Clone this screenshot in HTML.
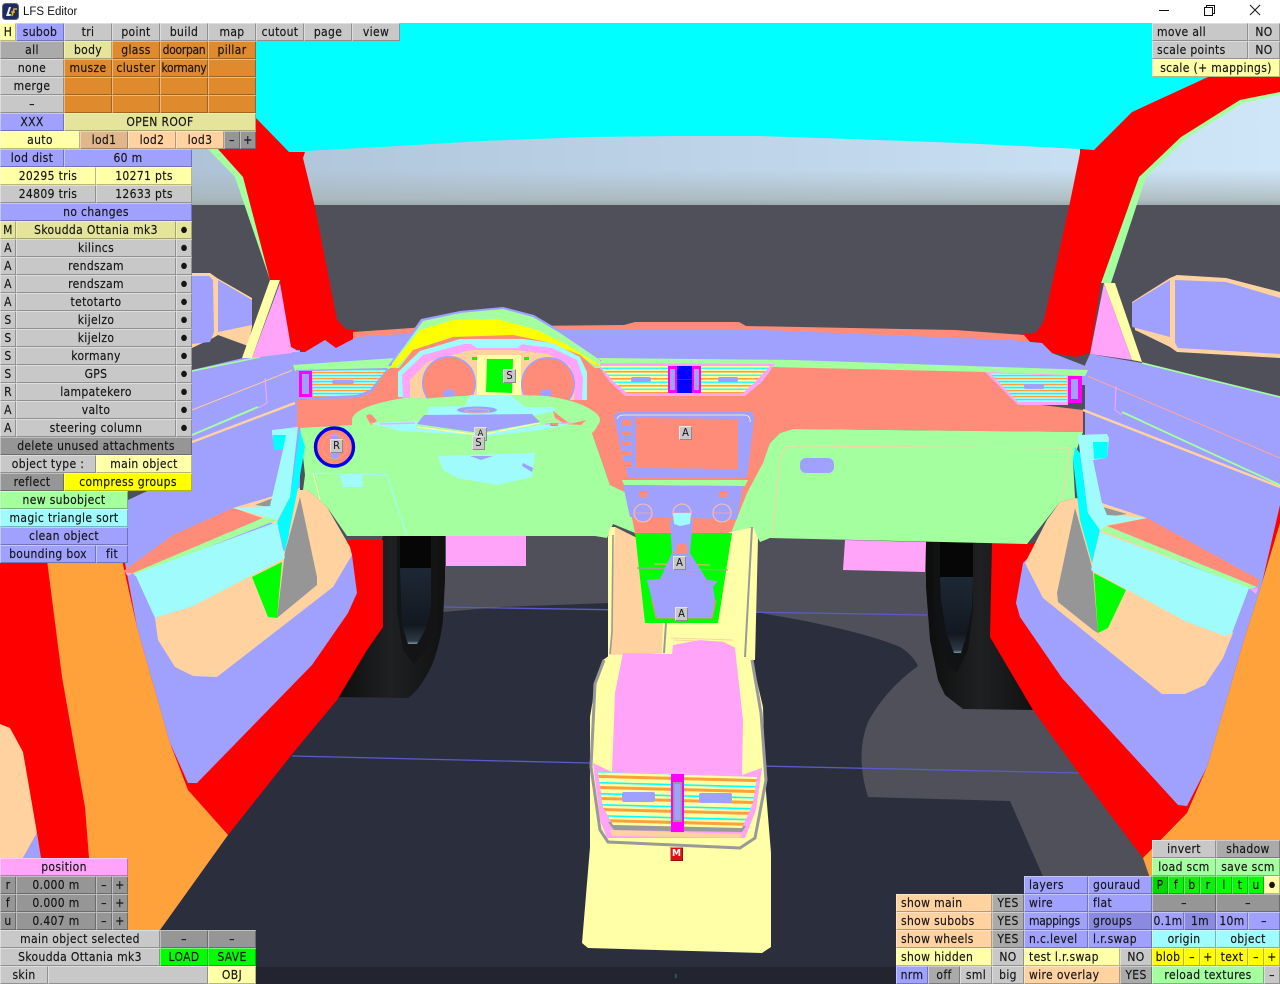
<!DOCTYPE html>
<html><head><meta charset="utf-8"><title>LFS Editor</title>
<style>
html,body{margin:0;padding:0;background:#fff;overflow:hidden}
#w{position:relative;width:1280px;height:984px;overflow:hidden;background:#fff}
svg{position:absolute;left:0;top:0}
.b{position:absolute;height:18px;line-height:18px;text-align:center;box-sizing:border-box;font-family:"DejaVu Sans Condensed","DejaVu Sans",sans-serif;font-stretch:condensed;font-size:12px;letter-spacing:.35px;-webkit-text-stroke:.15px #151515;color:#151515;white-space:nowrap;box-shadow:inset 1px 1px 0 rgba(255,255,255,.4),inset -1px -1px 0 rgba(0,0,0,.28)}
.l{text-align:left;padding-left:5px}
.u{font-size:8px;letter-spacing:0}
.z{letter-spacing:-.3px}
.g{background:#c8c8c8}.d{background:#969696}.m{background:#aaa}.p{background:#a0a0ff}.q{background:#8a8ae0}.y{background:#ffffa8}.e{background:#e4e49a}.o{background:#e08a2e}.s{background:#ffd2a0}.t{background:#dfb78a}.c{background:#a0fcfc}.n{background:#a4ff9f}.Y{background:#ff0}.G{background:#0f0}.k{background:#ffa4f8}.j{background:#00d800}.h{background:#10ee10}
.tag{position:absolute;width:13px;height:14px;line-height:14px;text-align:center;font-family:"DejaVu Sans Condensed","DejaVu Sans",sans-serif;font-stretch:condensed;font-size:11px;color:#111;background:#c8c8c8;box-shadow:inset 1px 1px 0 rgba(255,255,255,.5),inset -1px -1px 0 rgba(0,0,0,.3)}
#tt{position:absolute;left:23px;top:5px;font:11.5px/15px "Liberation Sans",sans-serif;color:#111}
</style></head><body><div id="w">
<svg width="1280" height="984" viewBox="0 0 1280 984" xmlns="http://www.w3.org/2000/svg">
<defs>
<linearGradient id="sk" x1="0" y1="0" x2="1" y2="0"><stop offset="0" stop-color="#a9bdd2"/><stop offset=".55" stop-color="#bcd3e8"/><stop offset="1" stop-color="#cfe6f8"/></linearGradient>
<linearGradient id="hz" x1="0" y1="0" x2="0" y2="1"><stop offset="0" stop-color="#a9b5b5" stop-opacity="0"/><stop offset=".8" stop-color="#a9b5b5" stop-opacity=".75"/><stop offset="1" stop-color="#97a5a8" stop-opacity=".95"/></linearGradient>
<linearGradient id="hole" x1="0" y1="0" x2="0" y2="1"><stop offset="0" stop-color="#1d2835"/><stop offset=".75" stop-color="#131820"/><stop offset=".96" stop-color="#2c3945"/><stop offset="1" stop-color="#7d93a3"/></linearGradient>
<linearGradient id="ty" x1="0" y1="0" x2="1" y2="0"><stop offset="0" stop-color="#0d0d0d"/><stop offset=".5" stop-color="#1f2022"/><stop offset="1" stop-color="#111"/></linearGradient>
<pattern id="st" width="9" height="7" patternUnits="userSpaceOnUse"><rect width="9" height="7" fill="#ffffa8"/><rect y="0" width="9" height="1.6" fill="#ffa03a"/><rect y="3.6" width="9" height="1.2" fill="#00ffff"/></pattern>
<pattern id="st2" width="9" height="6" patternUnits="userSpaceOnUse"><rect width="9" height="6" fill="#a0fcfc"/><rect y="0" width="9" height="1.2" fill="#ffa03a"/><rect y="3" width="9" height="1.2" fill="#00ffff"/></pattern>
<pattern id="st3" width="9" height="11" patternUnits="userSpaceOnUse" patternTransform="rotate(1.5)"><rect width="9" height="11" fill="#ffffa8"/><rect y="0" width="9" height="3" fill="#ffa03a"/><rect y="7" width="9" height="1.6" fill="#00ffff"/></pattern>
</defs>
<rect x="0" y="23" width="1280" height="190" fill="url(#sk)"/>
<rect x="0" y="170" width="1280" height="36" fill="url(#hz)"/>
<polygon fill="#0ff" points="256,23 1280,23 1280,77 1208,77 1132,112 1094,150 1080,149 960,143 850,139 760,136 677,136 590,137 482,141 380,147 305,151 289,152 256,118"/>
<rect x="0" y="205" width="1280" height="779" fill="#50505a"/>
<path fill="#2b2f3d" d="M443,612 L500,607 L608,603 L755,612 L800,620 Q870,634 900,647 Q912,654 918,666 Q885,690 868,722 Q855,755 868,797 L1010,801 L1090,984 L0,984 L0,700 Z"/>
<rect x="256" y="967" width="640" height="17" fill="#22252f"/>
<rect x="675" y="974" width="1.5" height="4" fill="#1d6b5a"/>
<path d="M443,607 L927,615 M292,756 L590,763 M760,766 L1080,773" stroke="#5a5acc" stroke-width="1.3" fill="none"/>
<!-- pink behind -->
<polygon fill="#ffa4f8" points="446,536 526,536 526,566 446,566"/>
<polygon fill="#ffa4f8" points="845,540 926,542 925,572 843,570"/>
<!-- left wheel -->
<path d="M383,536 L445,536 L445,580 L443,620 Q440,645 432,665 Q420,690 408,698 L335,697 Z" fill="url(#ty)"/>
<path d="M397,536 L433,536 L433,610 Q430,640 426,650 L414,664 L403,650 L397,610 Z" fill="#141416"/>
<rect x="400" y="536" width="31" height="32" fill="#060606"/>
<path d="M400,568 L431,568 L431,605 Q428,625 424,632 L417,644 L408,644 L402,625 Z" fill="url(#hole)"/>
<!-- right wheel -->
<path d="M926,540 L995,540 L1033,710 L963,709 L945,695 L938,680 L930,640 L926,587 Z" fill="url(#ty)"/>
<path d="M933,540 L973,540 L973,610 L968,650 L957,673 L948,666 L938,630 L933,590 Z" fill="#111214"/>
<rect x="940" y="540" width="33" height="37" fill="#060606"/>
<path d="M940,577 L973,577 L972,610 L965,640 L961,653 L954,653 L946,632 L941,600 Z" fill="url(#hole)"/>
<!-- left pillar -->
<polygon fill="#a4ff9f" points="207,148 235,177 270,280 280,283 244,178 218,149"/>
<polygon fill="#f00" points="256,118 289,152 305,152 303,158 315,207 337,320 346,329 371,333 336,348 332,348 325,340 305,352 291,347 280,283 270,280 243,177 218,149"/>
<!-- right pillar -->
<polygon fill="#a4ff9f" points="1101,283 1139,177 1181,137 1240,100 1280,92 1280,95 1243,103 1188,137 1146,177 1111,283"/>
<polygon fill="#f00" points="1094,150 1132,112 1208,77 1280,77 1280,92 1240,100 1181,137 1139,177 1101,283 1090,353 1076,357 1052,353 1042,343 1007,337 1037,332 1044,320 1069,207 1080,153 1080,149"/>
<!-- mirrors -->
<path d="M192,273 L210,273 L217,278 L252,298 L252,327 L248,346 L218,335 L213,338 L192,348 Z" fill="#ffd2a0"/>
<path d="M192,276 L209,276 L213,280 L214,332 L210,342 L192,344 Z" fill="#a0a0ff"/>
<path d="M218,280 L252,300 L252,325 L218,332 Z" fill="#a0a0ff"/>
<path d="M1132,302 L1170,278 L1177,275 L1226,278 L1280,292 L1280,358 L1177,352 L1170,347 L1135,330 Z" fill="#ffd2a0"/>
<path d="M1132,303 L1170,280 L1170,337 L1132,327 Z" fill="#a0a0ff"/>
<path d="M1175,280 L1226,282 L1280,298 L1280,354 L1178,348 L1175,343 Z" fill="#a0a0ff"/>
<!-- left red / orange -->
<polygon fill="#f00" points="0,560 125,560 352,540 383,540 383,627 367,650 337,700 293,753 228,835 188,790 89,860 40,860 0,860"/>
<polygon fill="#ffa23c" points="47,560 122,560 137,627 170,743 188,790 228,835 160,930 130,935 89,858 85,807 62,677"/>
<polygon fill="#ffd2a0" points="0,724 10,728 23,752 37,833 23,858 0,858"/>
<polygon fill="#a0a0ff" points="37,833 41,858 23,858"/>
<!-- left door peri -->
<polygon fill="#a0a0ff" points="192,370 243,358 300,350 300,490 352,555 357,593 348,613 312,665 197,783 188,783 170,743 137,627 125,563 128,500 192,470"/>
<!-- right red / orange -->
<polygon fill="#f00" points="992,543 1027,544 1280,503 1280,523 1243,643 1207,767 1187,813 1143,858 1078,772 1033,710 990,637"/>
<polygon fill="#ffa23c" points="1280,523 1262,583 1243,643 1207,767 1187,813 1143,858 1152,884 1280,884"/>
<!-- right door peri -->
<polygon fill="#a0a0ff" points="1023,563 1016,603 1020,617 1062,678 1178,805 1187,806 1207,767 1243,643 1262,583 1280,505 1280,397 1142,363 1090,354 1085,365 1085,500"/>
<path d="M1142,363 L1280,397" stroke="#a4ff9f" stroke-width="1.6"/>
<path d="M192,371 L260,357" stroke="#a4ff9f" stroke-width="1.6"/>
<!-- pillar bases -->
<polygon fill="#ffffa8" points="270,280 280,280 252,358 242,358"/>
<polygon fill="#ffa4f8" points="280,283 291,347 300,352 252,358"/>
<polygon fill="#ffffa8" points="1104,283 1115,283 1142,362 1132,360"/>
<polygon fill="#ffa4f8" points="1104,283 1132,360 1090,354"/>
<!-- door lines -->
<path d="M192,442 L295,403" stroke="#ffd2a0" stroke-width="2.4"/>
<path d="M192,435 L258,407" stroke="#a4ff9f" stroke-width="2"/>
<path d="M192,410 L293,370" stroke="#ffc8a0" stroke-width="1"/>
<path d="M265,378 L267,403 L258,408" stroke="#ffa4f8" stroke-width="1" fill="none"/>
<path d="M1083,410 L1280,487" stroke="#ffd2a0" stroke-width="2.4"/>
<path d="M1122,412 L1280,485" stroke="#a4ff9f" stroke-width="1.8"/>
<path d="M1085,375 L1280,458" stroke="#ffa4a0" stroke-width="1"/>
<path d="M1116,386 L1115,410 L1122,415" stroke="#ffa4f8" stroke-width="1" fill="none"/>
<!-- dashboard top -->
<polygon fill="#ff8c78" points="353,332 426,327 624,325 635,322 739,322 746,326 955,330 1024,335 1030,342 353,342"/>
<polygon fill="#a0a0ff" points="292,352 305,352 325,340 336,348 357,337 420,333 560,329 740,329 1010,340 1042,343 1052,353 1088,367 1088,385 292,385"/>
<polygon fill="#a4ff9f" points="293,365 395,358 600,358 793,360 1088,370 1085,376 987,373 760,367 600,366 390,369 295,371"/>
<!-- salmon body -->
<polygon fill="#ff8c78" points="297,400 360,397 390,368 600,363 627,395 743,393 770,367 987,372 1017,402 1083,410 1083,432 793,429 780,433 770,443 760,477 747,493 755,525 733,535 635,535 627,493 610,485 592,433 297,428"/>
<!-- green body -->
<polygon fill="#a4ff9f" points="300,428 352,425 480,400 592,433 610,485 627,493 635,533 613,524 607,538 595,536 347,536 327,507 308,490 303,490 305,475"/>
<ellipse cx="476" cy="420" rx="124" ry="27" fill="#a4ff9f"/>
<polygon fill="#a4ff9f" points="793,429 1083,432 1073,460 1075,498 1060,502 1027,544 770,538 760,542 752,527 731,533 747,493 763,463 770,443 780,433"/>
<path d="M772,537 L780,460 Q782,446 792,446 L1070,448 L1062,500" stroke="#ffd2a0" stroke-width="1" fill="none" opacity=".9"/>
<rect x="800" y="458" width="34" height="15" rx="6" fill="#a0a0ff"/>
<!-- left vent -->
<polygon fill="#a0a0ff" points="296,370 388,368 372,392 358,398 296,400"/>
<polygon fill="url(#st2)" points="312,371 387,369 370,390 357,395 313,397"/>
<rect x="332" y="380" width="22" height="4" rx="2" fill="#a0a0ff"/>
<rect x="299" y="371" width="13" height="26" fill="#f0f"/>
<rect x="302" y="374" width="7" height="20" fill="#a0a0ff"/>
<!-- right vent -->
<polygon fill="#ffa4f8" points="985,372 1068,375 1068,405 1018,405"/>
<polygon fill="url(#st2)" points="990,373 1067,376 1067,402 1018,402"/>
<rect x="1024" y="384" width="20" height="5" rx="2" fill="#a0a0ff"/>
<rect x="1068" y="376" width="14" height="27" fill="#f0f"/>
<rect x="1071" y="379" width="7" height="20" fill="#a0a0ff"/>
<!-- center vent -->
<polygon fill="#ffa4f8" points="596,363 775,364 762,382 745,396 625,396 610,382"/>
<polygon fill="url(#st)" points="600,366 770,366 757,380 743,393 627,393 612,380"/>
<rect x="631" y="377" width="20" height="5" rx="2" fill="#a0a0ff"/>
<rect x="718" y="377" width="20" height="5" rx="2" fill="#a0a0ff"/>
<rect x="668" y="366" width="9" height="27" fill="#f0f"/><rect x="670" y="369" width="5" height="21" fill="#a0a0ff"/>
<rect x="692" y="366" width="9" height="27" fill="#f0f"/><rect x="694" y="369" width="5" height="21" fill="#a0a0ff"/>
<rect x="677" y="366" width="15" height="27" fill="#00f"/><rect x="677" y="379" width="15" height="1" fill="#2a2ad0"/>
<!-- cluster hood -->
<path d="M388,366 L421,319 L460,311 L503,307 L534,315 L561,331 L602,361 Z" fill="#a0a0ff"/>
<path d="M392,363 L423,321 L460,313 L503,309 L533,317 L560,333 L600,360 L600,368 L392,368 Z" fill="#a4ff9f"/>
<path d="M390,367 L420,330 L453,320 L497,319 L537,330 L567,345 L600,365 L595,365 L580,355 L547,342 L513,335 L453,337 L413,350 L396,367 Z" fill="#ff0"/>
<path d="M396,397 L395,373 L413,350 L453,337 L513,335 L547,342 L580,355 L595,368 L590,400 Z" fill="#ff8c78"/>
<path d="M398,397 L398,372 L420,351 L460,339 L523,339 L553,343 L580,357 L587,372 L587,400 Z" fill="#a0fcfc"/>
<path d="M403,398 L402,375 L423,355 L464,344 L520,344 L552,348 L577,360 L583,378 L582,400 Z" fill="#ffa4f8"/>
<path d="M410,398 L410,380 L427,362 L470,350 L518,350 L548,354 L570,366 L575,382 L574,400 Z" fill="#ffd2a0"/>
<polygon fill="#a0fcfc" points="468,342 523,342 518,348 477,348"/>
<circle cx="449" cy="383" r="27" fill="#a0a0ff"/><circle cx="449" cy="383" r="25.5" fill="#ff8c78"/>
<circle cx="548" cy="384" r="27" fill="#a0a0ff"/><circle cx="548" cy="384" r="25.5" fill="#ff8c78"/>
<ellipse cx="449" cy="394" rx="6" ry="5" fill="#a0a0ff"/><ellipse cx="546" cy="394" rx="6" ry="5" fill="#a0a0ff"/>
<polygon fill="#ffffa8" points="477,355 521,355 521,397 477,397"/>
<polygon fill="#0f0" points="487,359 513,359 512,393 486,392"/>
<rect x="472" y="357" width="5" height="3" fill="#0f0"/><rect x="524" y="357" width="5" height="3" fill="#0f0"/>
<!-- steering -->
<path d="M352,424 Q352,408 395,402 Q470,392 547,396 Q596,404 599,420 Q598,428 592,433 L352,432 Z" fill="#a4ff9f"/>
<path d="M366,416 Q368,413 372,415 L377,421 L371,425 Z" fill="#ff8c78"/>
<path d="M553,411 L570,424 L586,420 L581,425 L565,424 L555,418 Z" fill="#ff8c78"/>
<polygon fill="#a0fcfc" points="470,395 510,395 525,407 555,407 555,411 532,416 533,422 480,430 427,424 428,407 465,406"/>
<path d="M370,423 L420,421 L415,428 L477,435 L540,425 L573,423 L548,429 L490,436 L400,431 Z" fill="#a0fcfc"/>
<path d="M417,424 L424,415 L532,414 L540,422 L480,433 Z" fill="#a0a0ff"/>
<path d="M417,427 L480,435 L540,423" stroke="#ffffa8" stroke-width="1.4" fill="none"/>
<ellipse cx="477" cy="410" rx="20" ry="3.5" fill="#a0a0ff"/><ellipse cx="477" cy="411" rx="12" ry="2" fill="none" stroke="#ffb090" stroke-width=".8"/>
<path d="M380,424 L415,423 M545,424 L572,423" stroke="#ffa4f8" stroke-width="1.4"/>
<rect x="550" y="423" width="8" height="3" fill="#ff8c78"/>
<!-- swoosh -->
<polygon fill="#a0fcfc" points="438,456 535,453 532,477 497,485 457,478 443,470"/>
<path d="M470,456 L493,456 L481,460 Z" fill="#a0a0ff"/>
<polygon fill="#a0a0ff" points="523,463 533,468 532,472 522,466"/>
<!-- glove -->
<path d="M313,473 L387,475 L407,536" stroke="#a0fcfc" stroke-width="1" fill="none"/>
<path d="M313,473 L320,500" stroke="#ffffa8" stroke-width="1" fill="none"/>
<polygon fill="#a0fcfc" points="340,475 362,474 363,487 343,487"/>
<!-- ignition -->
<circle cx="334.500" cy="447" r="19" fill="#ff8c78" stroke="#0000e6" stroke-width="3.4"/>
<rect x="331" y="434" width="8" height="26" rx="2" fill="#a0a0ff"/>
<circle cx="334.500" cy="447" r="12" fill="none" stroke="#ffa880" stroke-width="1" stroke-dasharray="2 1"/>
<!-- nav -->
<path d="M612,414 Q613,410 620,410 L750,410 Q757,411 756,420 L748,478 L628,480 L618,445 Z" fill="#ff8c78"/>
<path d="M614,416 Q615,412 622,412 L748,412 Q755,412 754,420 L747,478 L628,478 L620,445 Z" fill="#a0a0ff"/>
<path d="M617,419 Q618,415 624,415 L745,415 Q751,416 750,422" stroke="#ffffa8" stroke-width=".8" fill="none"/>
<polygon fill="#ff8c78" points="636,418 738,419 738,469 636,468"/>
<rect x="622" y="420" width="9" height="5" fill="#ff8c78"/><rect x="622" y="431" width="9" height="4" fill="#ff8c78"/><rect x="622" y="441" width="9" height="4" fill="#ff8c78"/><rect x="622" y="451" width="9" height="4" fill="#ff8c78"/><rect x="623" y="461" width="9" height="6" fill="#ff8c78"/>
<polygon fill="#a4ff9f" points="622,480 748,480 745,486 624,485"/>
<polygon fill="#a0a0ff" points="623,485 743,486 737,519 630,517"/>
<rect x="639" y="492" width="8" height="5" fill="#ff8c78"/><rect x="719" y="492" width="8" height="5" fill="#ff8c78"/>
<g stroke="#ffc0a0" stroke-width="1.1" fill="#a0a0ff"><circle cx="643" cy="513" r="9"/><circle cx="682" cy="513" r="9"/><circle cx="722" cy="513" r="9"/></g>
<path d="M633,513 L653,513 M672,513 L692,513 M712,513 L732,513" stroke="#ffa4a0" stroke-width=".7"/>
<!-- console -->
<polygon fill="#ffffa8" points="608,537 610,527 615,527 635,537 727,533 753,527 758,538 755,660 608,660"/>
<polygon fill="#ffd2a0" points="615,527 635,537 647,622 663,623 662,653 610,655"/>
<polygon fill="#0f0" points="635,533 732,533 718,623 645,623"/>
<path d="M637,568 L728,570" stroke="#a0a0a0" stroke-width="1.2"/>
<path d="M654,564 L710,565" stroke="#ffb070" stroke-width="1"/>
<polygon fill="#a0a0ff" points="670,520 693,520 690,553 707,580 718,581 713,587 715,600 712,618 657,618 652,600 647,580 660,579 672,553"/>
<path d="M652,600 L656,618 L712,618 L716,600" stroke="#ff8c78" stroke-width="1" fill="none"/>
<polygon fill="#ff8c78" points="675,553 688,553 686,544 678,544"/>
<polygon fill="#a0fcfc" points="673,513 691,513 690,524 680,526 674,524"/>
<path d="M666,623 L664,653 M752,527 L745,657" stroke="#9a9a9a" stroke-width="2" fill="none"/>
<path d="M613,535 L612,632 L610,654" stroke="#9a9a9a" stroke-width="1.6" fill="none"/>
<polygon fill="#ffffa8" points="603,660 610,655 752,660 763,707 765,780 771,853 771,947 762,953 588,948 582,943 590,847 590,717 595,687"/>
<path d="M604,660 L595,684 L591,767 L600,830 L608,842 L740,848 L755,838 L766,780 L761,713 L752,660" stroke="#999" stroke-width="3" fill="none"/>
<path d="M673,640 L723,642 L735,648 M671,638 L733,640" stroke="#ffd2a0" stroke-width="1" fill="none"/>
<polygon fill="#ffa4f8" points="623,653 672,654 673,645 700,640 723,642 735,648 743,720 742,775 612,772 615,693"/>
<polygon fill="#ffa4f8" points="593,763 612,772 742,775 762,768 756,810 745,838 607,838 600,820"/>
<polygon fill="#ffd2a0" points="610,830 742,834 740,838 612,836"/>
<polygon fill="#999" points="608,822 746,826 742,832 614,830"/>
<polygon fill="url(#st3)" points="598,772 757,777 753,803 742,828 613,825 603,807"/>
<rect x="622" y="792" width="33" height="10" rx="2" fill="#a0a0ff"/><rect x="699" y="793" width="33" height="10" rx="2" fill="#a0a0ff"/>
<rect x="671" y="774" width="13" height="58" fill="#f0f"/>
<rect x="673" y="782" width="9" height="40" fill="#999"/><rect x="674.500" y="784" width="6" height="36" fill="#a0a0ff"/>
<!-- left door detail -->
<polygon fill="#ffd2a0" points="155,618 158,640 175,667 193,676 217,677 333,587 352,555 350,547 327,507 308,490 300,490 285,520 233,508 275,497 300,490 285,550 193,606"/>
<polygon fill="#ffd2a0" points="233,508 300,488 300,540 270,522"/>
<polygon fill="#969696" points="255,505 273,498 270,507"/>
<polygon fill="#969696" points="300,497 285,552 277,618 317,585 317,577"/>
<polygon fill="#0f0" points="252,577 282,562 277,618 268,617"/>
<polygon fill="#ff8c78" points="122,572 173,535 233,508 268,520 133,574"/>
<polygon fill="#a4ff9f" points="133,573 270,515 277,520 135,576"/>
<polygon fill="#a0fcfc" points="135,574 277,522 285,558 193,606 155,618"/>
<polygon fill="#a0fcfc" points="272,430 298,427 290,497 277,520 233,508 270,506 283,450 275,450 272,433"/>
<polygon fill="#0ff" points="300,430 305,447 297,493 285,552 277,522 290,497"/>
<polygon fill="#0ff" points="273,435 286,435 283,450 274,450"/>
<polygon fill="#ffa4f8" points="125,573 133,573 128,576"/>
<!-- right door detail -->
<polygon fill="#ffd2a0" points="1025,563 1047,520 1060,502 1075,498 1102,503 1147,518 1233,633 1223,658 1205,685 1185,694 1162,694 1043,598"/>
<polygon fill="#969696" points="1075,508 1057,593 1058,602 1093,630 1098,633 1093,573 1090,560"/>
<polygon fill="#969696" points="1103,507 1127,514 1107,517"/>
<polygon fill="#0f0" points="1094,573 1126,590 1108,628 1098,633"/>
<polygon fill="#ff8c78" points="1107,526 1147,518 1260,580 1257,587"/>
<polygon fill="#a4ff9f" points="1100,530 1107,526 1257,587 1250,589"/>
<polygon fill="#a0fcfc" points="1100,532 1091,570 1187,622 1225,636 1232,633 1249,588"/>
<polygon fill="#0ff" points="1075,447 1073,460 1080,520 1092,563 1100,530 1088,513 1080,453"/>
<polygon fill="#a0fcfc" points="1078,435 1107,434 1109,438 1107,458 1093,460 1102,503 1107,515 1147,518 1107,525 1100,530 1088,513 1080,453"/>
<polygon fill="#0ff" points="1093,442 1108,442 1107,458 1094,459"/>
<polygon fill="#ffa4f8" points="1250,589 1258,588 1256,594"/>
</svg>

<div id="tt">LFS Editor</div>
<svg width="18" height="18" style="left:2px;top:3px" viewBox="0 0 18 18"><rect x="0.500" y="0.500" width="16" height="16" rx="3" fill="#1c2c63" stroke="#666"/><path d="M4,13 L7,4 L9,4 L6.800,11 L9,11 L8.500,13 Z" fill="#eee"/><path d="M10,13 L12,6 L15,6" stroke="#f2a511" stroke-width="1.600" fill="none"/><path d="M9,9 L13,9" stroke="#f2c511" stroke-width="1.200"/></svg>
<svg width="1280" height="23" viewBox="0 0 1280 23" style="pointer-events:none"><path d="M1159,10.500 H1169" stroke="#111"/><path d="M1204.500,7.500 H1212.500 V15.500 H1204.500 Z M1206.500,7.500 V5.500 H1214.500 V13.500 H1212.500" stroke="#111" fill="none"/><path d="M1250,5 L1260,15 M1260,5 L1250,15" stroke="#111"/></svg>

<!-- top row -->
<div class="b y" style="left:0;top:23px;width:16px">H</div><div class="b p" style="left:16px;top:23px;width:48px">subob</div><div class="b g" style="left:64px;top:23px;width:48px">tri</div><div class="b g" style="left:112px;top:23px;width:48px">point</div><div class="b g" style="left:160px;top:23px;width:48px">build</div><div class="b g" style="left:208px;top:23px;width:48px">map</div><div class="b g" style="left:256px;top:23px;width:48px">cutout</div><div class="b g" style="left:304px;top:23px;width:48px">page</div><div class="b g" style="left:352px;top:23px;width:48px">view</div>
<div class="b m" style="left:0;top:41px;width:64px">all</div><div class="b e" style="left:64px;top:41px;width:48px">body</div><div class="b o" style="left:112px;top:41px;width:48px">glass</div><div class="b o z" style="left:160px;top:41px;width:48px">doorpan</div><div class="b o" style="left:208px;top:41px;width:48px">pillar</div>
<div class="b g" style="left:0;top:59px;width:64px">none</div><div class="b o" style="left:64px;top:59px;width:48px">musze</div><div class="b o" style="left:112px;top:59px;width:48px">cluster</div><div class="b o z" style="left:160px;top:59px;width:48px">kormany</div><div class="b o" style="left:208px;top:59px;width:48px"></div>
<div class="b g" style="left:0;top:77px;width:64px">merge</div><div class="b o" style="left:64px;top:77px;width:48px"></div><div class="b o" style="left:112px;top:77px;width:48px"></div><div class="b o" style="left:160px;top:77px;width:48px"></div><div class="b o" style="left:208px;top:77px;width:48px"></div>
<div class="b g" style="left:0;top:95px;width:64px">–</div><div class="b o" style="left:64px;top:95px;width:48px"></div><div class="b o" style="left:112px;top:95px;width:48px"></div><div class="b o" style="left:160px;top:95px;width:48px"></div><div class="b o" style="left:208px;top:95px;width:48px"></div>
<div class="b p" style="left:0;top:113px;width:64px">XXX</div><div class="b e" style="left:64px;top:113px;width:192px">OPEN ROOF</div>
<div class="b y" style="left:0;top:131px;width:80px">auto</div><div class="b t" style="left:80px;top:131px;width:48px">lod1</div><div class="b s" style="left:128px;top:131px;width:48px">lod2</div><div class="b s" style="left:176px;top:131px;width:48px">lod3</div><div class="b d" style="left:224px;top:131px;width:16px">–</div><div class="b d" style="left:240px;top:131px;width:16px">+</div>
<div class="b p" style="left:0;top:149px;width:64px">lod dist</div><div class="b p" style="left:64px;top:149px;width:128px">60 m</div>
<div class="b y" style="left:0;top:167px;width:96px">20295 tris</div><div class="b y" style="left:96px;top:167px;width:96px">10271 pts</div>
<div class="b g" style="left:0;top:185px;width:96px">24809 tris</div><div class="b g" style="left:96px;top:185px;width:96px">12633 pts</div>
<div class="b p" style="left:0;top:203px;width:192px">no changes</div>
<div class="b e" style="left:0;top:221px;width:16px">M</div><div class="b e" style="left:16px;top:221px;width:160px">Skoudda Ottania mk3</div><div class="b e u" style="left:176px;top:221px;width:16px">●</div>
<div class="b g" style="left:0;top:239px;width:16px">A</div><div class="b g" style="left:16px;top:239px;width:160px">kilincs</div><div class="b g u" style="left:176px;top:239px;width:16px">●</div>
<div class="b g" style="left:0;top:257px;width:16px">A</div><div class="b g" style="left:16px;top:257px;width:160px">rendszam</div><div class="b g u" style="left:176px;top:257px;width:16px">●</div>
<div class="b g" style="left:0;top:275px;width:16px">A</div><div class="b g" style="left:16px;top:275px;width:160px">rendszam</div><div class="b g u" style="left:176px;top:275px;width:16px">●</div>
<div class="b g" style="left:0;top:293px;width:16px">A</div><div class="b g" style="left:16px;top:293px;width:160px">tetotarto</div><div class="b g u" style="left:176px;top:293px;width:16px">●</div>
<div class="b g" style="left:0;top:311px;width:16px">S</div><div class="b g" style="left:16px;top:311px;width:160px">kijelzo</div><div class="b g u" style="left:176px;top:311px;width:16px">●</div>
<div class="b g" style="left:0;top:329px;width:16px">S</div><div class="b g" style="left:16px;top:329px;width:160px">kijelzo</div><div class="b g u" style="left:176px;top:329px;width:16px">●</div>
<div class="b g" style="left:0;top:347px;width:16px">S</div><div class="b g" style="left:16px;top:347px;width:160px">kormany</div><div class="b g u" style="left:176px;top:347px;width:16px">●</div>
<div class="b g" style="left:0;top:365px;width:16px">S</div><div class="b g" style="left:16px;top:365px;width:160px">GPS</div><div class="b g u" style="left:176px;top:365px;width:16px">●</div>
<div class="b g" style="left:0;top:383px;width:16px">R</div><div class="b g" style="left:16px;top:383px;width:160px">lampatekero</div><div class="b g u" style="left:176px;top:383px;width:16px">●</div>
<div class="b g" style="left:0;top:401px;width:16px">A</div><div class="b g" style="left:16px;top:401px;width:160px">valto</div><div class="b g u" style="left:176px;top:401px;width:16px">●</div>
<div class="b g" style="left:0;top:419px;width:16px">A</div><div class="b g" style="left:16px;top:419px;width:160px">steering column</div><div class="b g u" style="left:176px;top:419px;width:16px">●</div>
<div class="b d" style="left:0;top:437px;width:192px">delete unused attachments</div>
<div class="b g" style="left:0;top:455px;width:96px">object type :</div><div class="b y" style="left:96px;top:455px;width:96px">main object</div>
<div class="b d" style="left:0;top:473px;width:64px">reflect</div><div class="b Y" style="left:64px;top:473px;width:128px">compress groups</div>
<div class="b n" style="left:0;top:491px;width:128px">new subobject</div>
<div class="b c" style="left:0;top:509px;width:128px">magic triangle sort</div>
<div class="b p" style="left:0;top:527px;width:128px">clean object</div>
<div class="b p" style="left:0;top:545px;width:96px">bounding box</div><div class="b p" style="left:96px;top:545px;width:32px">fit</div>

<!-- top right -->
<div class="b g l" style="left:1152px;top:23px;width:96px">move all</div><div class="b g" style="left:1248px;top:23px;width:32px">NO</div>
<div class="b g l" style="left:1152px;top:41px;width:96px">scale points</div><div class="b g" style="left:1248px;top:41px;width:32px">NO</div>
<div class="b y" style="left:1152px;top:59px;width:128px">scale (+ mappings)</div>

<!-- bottom left -->
<div class="b k" style="left:0;top:858px;width:128px">position</div>
<div class="b d" style="left:0;top:876px;width:16px">r</div><div class="b d" style="left:16px;top:876px;width:80px">0.000 m</div><div class="b d" style="left:96px;top:876px;width:16px">–</div><div class="b d" style="left:112px;top:876px;width:16px">+</div>
<div class="b d" style="left:0;top:894px;width:16px">f</div><div class="b d" style="left:16px;top:894px;width:80px">0.000 m</div><div class="b d" style="left:96px;top:894px;width:16px">–</div><div class="b d" style="left:112px;top:894px;width:16px">+</div>
<div class="b d" style="left:0;top:912px;width:16px">u</div><div class="b d" style="left:16px;top:912px;width:80px">0.407 m</div><div class="b d" style="left:96px;top:912px;width:16px">–</div><div class="b d" style="left:112px;top:912px;width:16px">+</div>
<div class="b g" style="left:0;top:930px;width:160px">main object selected</div><div class="b d" style="left:160px;top:930px;width:48px">–</div><div class="b d" style="left:208px;top:930px;width:48px">–</div>
<div class="b g" style="left:0;top:948px;width:160px">Skoudda Ottania mk3</div><div class="b G" style="left:160px;top:948px;width:48px">LOAD</div><div class="b G" style="left:208px;top:948px;width:48px">SAVE</div>
<div class="b g" style="left:0;top:966px;width:48px">skin</div><div class="b g" style="left:48px;top:966px;width:160px"></div><div class="b y" style="left:208px;top:966px;width:48px">OBJ</div>

<!-- bottom right -->
<div class="b g" style="left:1152px;top:840px;width:64px">invert</div><div class="b m" style="left:1216px;top:840px;width:64px">shadow</div>
<div class="b n" style="left:1152px;top:858px;width:64px">load scm</div><div class="b n" style="left:1216px;top:858px;width:64px">save scm</div>
<div class="b p l" style="left:1024px;top:876px;width:64px">layers</div><div class="b p l" style="left:1088px;top:876px;width:64px">gouraud</div>
<div class="b j" style="left:1152px;top:876px;width:16px">P</div><div class="b h" style="left:1168px;top:876px;width:16px">f</div><div class="b h" style="left:1184px;top:876px;width:16px">b</div><div class="b h" style="left:1200px;top:876px;width:16px">r</div><div class="b G" style="left:1216px;top:876px;width:16px">l</div><div class="b G" style="left:1232px;top:876px;width:16px">t</div><div class="b G" style="left:1248px;top:876px;width:16px">u</div><div class="b y u" style="left:1264px;top:876px;width:16px">●</div>
<div class="b s l" style="left:896px;top:894px;width:96px">show main</div><div class="b m" style="left:992px;top:894px;width:32px">YES</div><div class="b p l" style="left:1024px;top:894px;width:64px">wire</div><div class="b p l" style="left:1088px;top:894px;width:64px">flat</div><div class="b d" style="left:1152px;top:894px;width:64px">–</div><div class="b d" style="left:1216px;top:894px;width:64px">–</div>
<div class="b s l" style="left:896px;top:912px;width:96px">show subobs</div><div class="b m" style="left:992px;top:912px;width:32px">YES</div><div class="b p l z" style="left:1024px;top:912px;width:64px">mappings</div><div class="b q l" style="left:1088px;top:912px;width:64px">groups</div><div class="b p" style="left:1152px;top:912px;width:32px">0.1m</div><div class="b q" style="left:1184px;top:912px;width:32px">1m</div><div class="b p" style="left:1216px;top:912px;width:32px">10m</div><div class="b p" style="left:1248px;top:912px;width:32px">–</div>
<div class="b s l" style="left:896px;top:930px;width:96px">show wheels</div><div class="b m" style="left:992px;top:930px;width:32px">YES</div><div class="b p l" style="left:1024px;top:930px;width:64px">n.c.level</div><div class="b p l" style="left:1088px;top:930px;width:64px">l.r.swap</div><div class="b c" style="left:1152px;top:930px;width:64px">origin</div><div class="b c" style="left:1216px;top:930px;width:64px">object</div>
<div class="b y l" style="left:896px;top:948px;width:96px">show hidden</div><div class="b g" style="left:992px;top:948px;width:32px">NO</div><div class="b y l" style="left:1024px;top:948px;width:96px">test l.r.swap</div><div class="b g" style="left:1120px;top:948px;width:32px">NO</div><div class="b Y" style="left:1152px;top:948px;width:32px">blob</div><div class="b Y" style="left:1184px;top:948px;width:16px">–</div><div class="b Y" style="left:1200px;top:948px;width:16px">+</div><div class="b Y" style="left:1216px;top:948px;width:32px">text</div><div class="b Y" style="left:1248px;top:948px;width:16px">–</div><div class="b Y" style="left:1264px;top:948px;width:16px">+</div>
<div class="b p" style="left:896px;top:966px;width:32px">nrm</div><div class="b m" style="left:928px;top:966px;width:32px">off</div><div class="b g" style="left:960px;top:966px;width:32px">sml</div><div class="b g" style="left:992px;top:966px;width:32px">big</div><div class="b s l" style="left:1024px;top:966px;width:96px">wire overlay</div><div class="b m" style="left:1120px;top:966px;width:32px">YES</div><div class="b n" style="left:1152px;top:966px;width:112px">reload textures</div><div class="b g" style="left:1264px;top:966px;width:16px">–</div>

<!-- scene tags -->
<div class="tag" style="left:503px;top:369px">S</div>
<div class="tag" style="left:474px;top:427px;font-size:9px">A</div>
<div class="tag" style="left:472px;top:436px">S</div>
<div class="tag" style="left:330px;top:439px">R</div>
<div class="tag" style="left:679px;top:426px">A</div>
<div class="tag" style="left:673px;top:556px">A</div>
<div class="tag" style="left:675px;top:607px">A</div>
<div class="tag" style="left:670px;top:847px;background:#e01010;color:#fff;font-weight:bold;font-size:10px">M</div>
</div></body></html>
